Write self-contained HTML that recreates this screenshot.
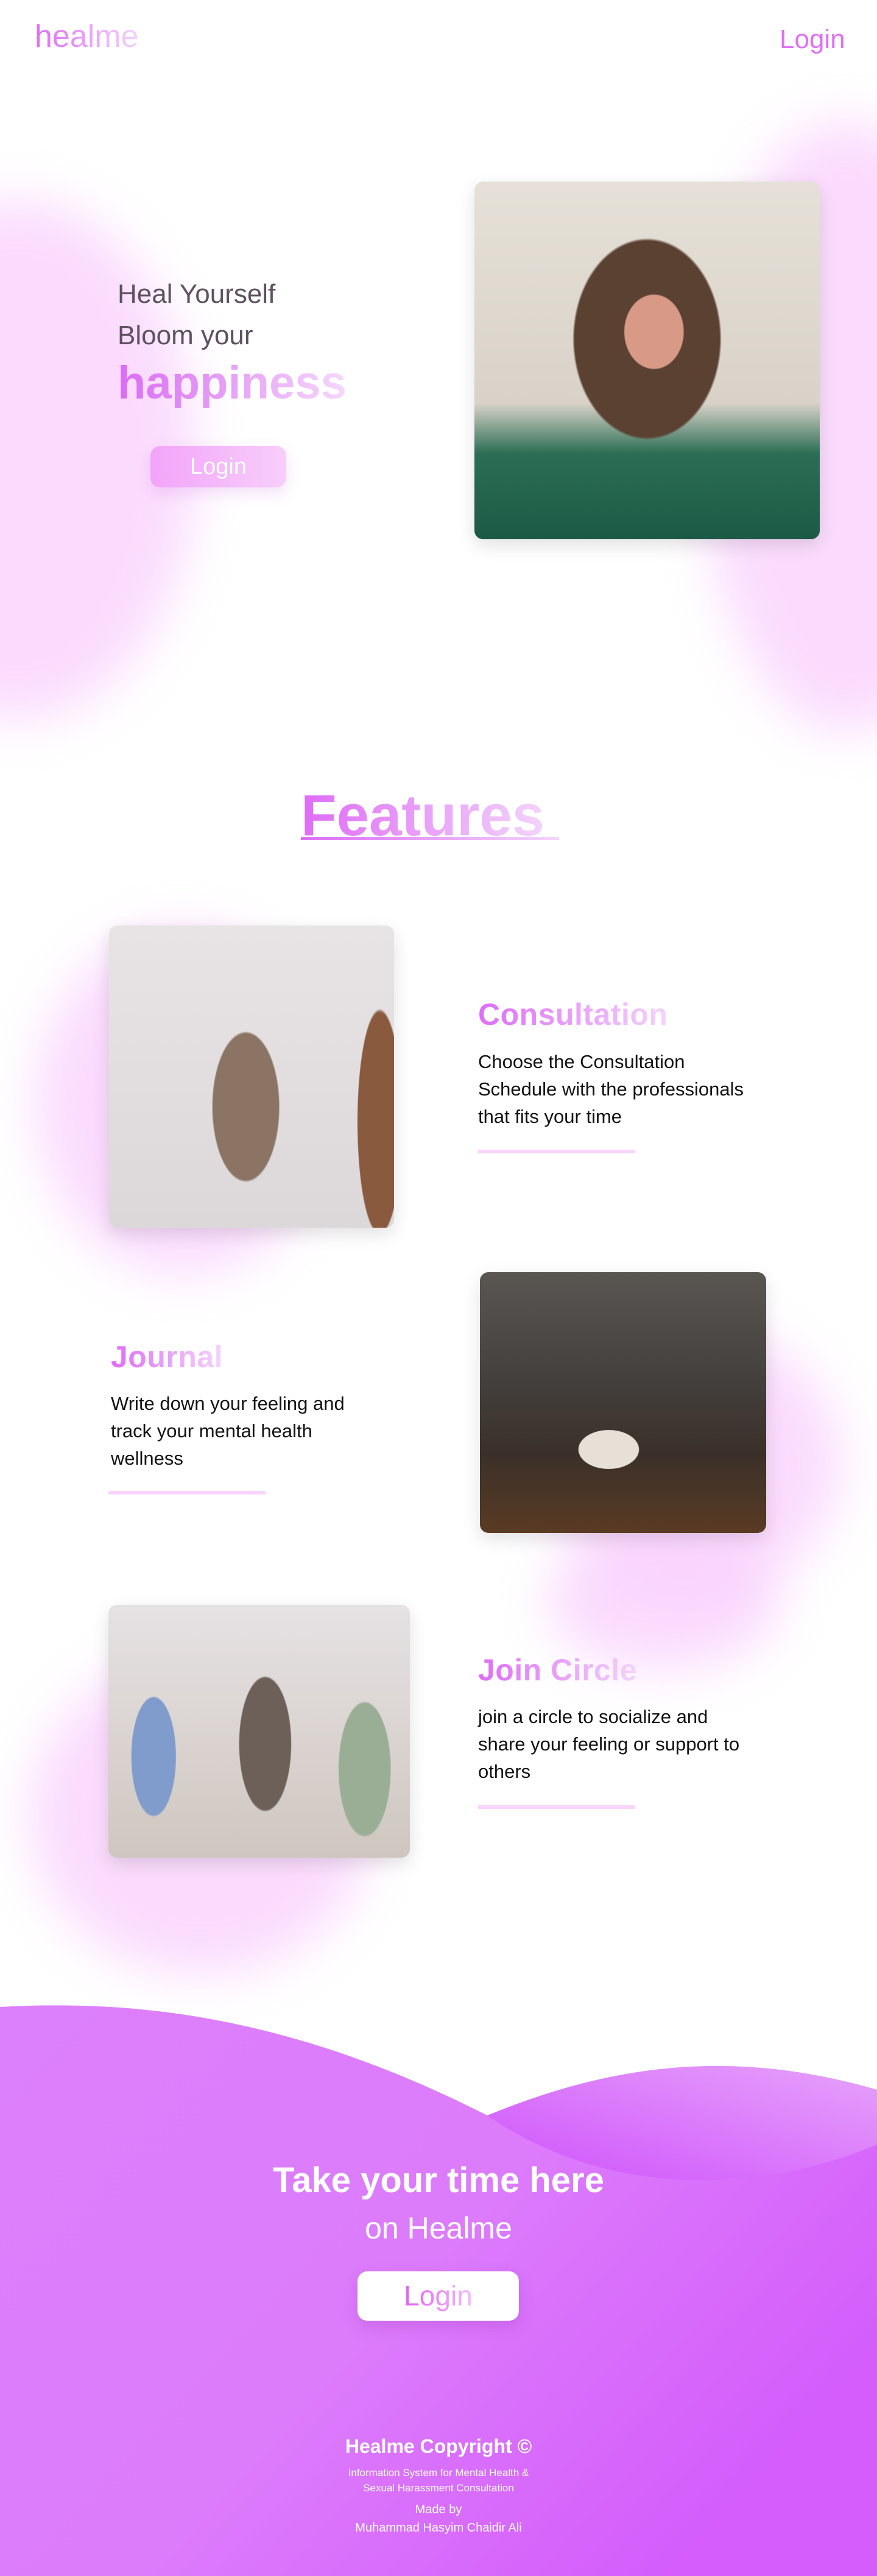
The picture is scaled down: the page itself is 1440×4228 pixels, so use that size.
<!DOCTYPE html>
<html><head><meta charset="utf-8"><style>
*{margin:0;padding:0;box-sizing:border-box}
body{width:1440px;height:4228px;position:relative;overflow:hidden;background:#fff;font-family:"Liberation Sans",sans-serif}
.a{position:absolute}
.blob{position:absolute;border-radius:50%;background:#f9cffd;filter:blur(40px);opacity:.75}
.grad{background:linear-gradient(90deg,#df6cf8,#f3d4fb);-webkit-background-clip:text;background-clip:text;color:transparent}
.h{font-weight:700;font-size:50px;letter-spacing:.5px}
.p{font-size:31px;line-height:45px;color:#111}
.ul{position:absolute;height:6px;width:258px;background:#f9d4fc}
.img{position:absolute;border-radius:14px;box-shadow:0 10px 30px rgba(0,0,0,.12);overflow:hidden}
</style></head><body>
<div class="blob" style="left:-260px;top:330px;width:580px;height:850px"></div>
<div class="blob" style="left:1150px;top:200px;width:480px;height:1000px"></div>
<div class="blob" style="left:60px;top:1530px;width:480px;height:560px"></div>
<div class="blob" style="left:900px;top:2180px;width:480px;height:440px"></div>
<div class="blob" style="left:50px;top:2720px;width:560px;height:520px"></div>
<div class="blob" style="left:900px;top:2510px;width:380px;height:230px"></div>

<div class="a grad" style="left:57px;top:30px;font-size:52px">healme</div>
<div class="a" style="left:1280px;top:40px;font-size:44px;color:#e070f5">Login</div>

<div class="img" style="left:779px;top:298px;width:567px;height:587px;background:
radial-gradient(ellipse 80px 100px at 52% 42%,#d89a86 60%,transparent 62%),
radial-gradient(ellipse 170px 230px at 50% 44%,#5b4131 70%,transparent 72%),
linear-gradient(180deg,#e6e1d8 0%,#d8d2c8 62%,#2c6e55 76%,#1c5a45 100%)"></div>

<div class="a" style="left:193px;top:449px;font-size:44px;color:#5e5160;line-height:68px">Heal Yourself<br>Bloom your</div>
<div class="a grad" style="left:193px;top:585px;font-size:76px;font-weight:700;background-image:linear-gradient(90deg,#d96cf4,#f5d8fb)">happiness</div>
<div class="a" style="left:247px;top:732px;width:223px;height:68px;border-radius:16px;background:linear-gradient(90deg,#f3a4f9,#f7cefb);box-shadow:0 10px 25px rgba(200,100,220,.2);color:#fff;font-size:38px;text-align:center;line-height:68px">Login</div>

<div class="a grad" style="left:494px;top:1284px;font-size:96px;font-weight:700">Features</div>
<div class="a" style="left:494px;top:1374px;width:424px;height:5px;background:linear-gradient(90deg,#dc6ef7,#f4d5fb)"></div>

<div class="img" style="left:179px;top:1519px;width:468px;height:496px;background:
radial-gradient(ellipse 90px 200px at 48% 60%,#8b7464 60%,transparent 62%),
radial-gradient(ellipse 60px 300px at 95% 65%,#8a5a3e 60%,transparent 62%),
linear-gradient(180deg,#e8e4e6,#dcd8da)"></div>
<div class="a grad h" style="left:785px;top:1636px">Consultation</div>
<div class="a p" style="left:785px;top:1720px">Choose the Consultation<br>Schedule with the professionals<br>that fits your time</div>
<div class="ul" style="left:785px;top:1887px"></div>

<div class="a grad h" style="left:182px;top:2198px">Journal</div>
<div class="a p" style="left:182px;top:2281px">Write down your feeling and<br>track your mental health<br>wellness</div>
<div class="ul" style="left:178px;top:2447px"></div>
<div class="img" style="left:788px;top:2088px;width:470px;height:428px;background:
radial-gradient(ellipse 70px 45px at 45% 68%,#e6e0d6 70%,transparent 72%),
linear-gradient(180deg,#5a5753 0%,#44413e 40%,#3b3029 70%,#5a3b24 100%)"></div>

<div class="img" style="left:178px;top:2634px;width:495px;height:415px;background:
radial-gradient(ellipse 60px 160px at 15% 60%,#7f9ccc 60%,transparent 62%),
radial-gradient(ellipse 70px 180px at 52% 55%,#6c6058 60%,transparent 62%),
radial-gradient(ellipse 70px 180px at 85% 65%,#9aae95 60%,transparent 62%),
linear-gradient(180deg,#e6e2e4,#cfc6bf)"></div>
<div class="a grad h" style="left:785px;top:2712px">Join Circle</div>
<div class="a p" style="left:785px;top:2795px">join a circle to socialize and<br>share your feeling or support to<br>others</div>
<div class="ul" style="left:785px;top:2963px"></div>

<svg class="a" style="left:0;top:3280px" width="1440" height="948" viewBox="0 0 1440 948">
<defs>
<linearGradient id="g1" x1="0" y1="0" x2="1" y2=".6"><stop offset="0" stop-color="#dd80fb"/><stop offset=".55" stop-color="#dc7cfb"/><stop offset="1" stop-color="#d45dfb"/></linearGradient>
<linearGradient id="g2" x1="0" y1="1" x2="1" y2="0"><stop offset="0" stop-color="#cf52fb"/><stop offset="1" stop-color="#e6a2fb"/></linearGradient>
</defs>
<path d="M0 14 C 250 0,500 40,800 192 C 1000 120,1200 80,1440 150 L1440 948 L0 948 Z" fill="url(#g1)"/>
<path d="M800 192 C 1000 110,1200 80,1440 150 L1440 240 C 1250 320,1000 330,800 192 Z" fill="url(#g2)"/>
</svg>
<div class="a" style="left:0;width:1440px;top:3545px;text-align:center;color:#fff;font-size:58px;font-weight:700">Take your time here</div>
<div class="a" style="left:0;width:1440px;top:3628px;text-align:center;color:#fff;font-size:50px">on Healme</div>
<div class="a" style="left:587px;top:3728px;width:265px;height:81px;border-radius:16px;background:#fff;box-shadow:0 10px 25px rgba(150,50,180,.25);text-align:center;line-height:81px;font-size:46px"><span class="grad" style="background-image:linear-gradient(90deg,#e060f5,#f6b8fb)">Login</span></div>
<div class="a" style="left:0;width:1440px;top:3997px;text-align:center;color:#fff;font-size:32px;font-weight:700">Healme Copyright ©</div>
<div class="a" style="left:0;width:1440px;top:4046px;text-align:center;color:#fff;font-size:17px;line-height:25px">Information System for Mental Health &amp;<br>Sexual Harassment Consultation</div>
<div class="a" style="left:0;width:1440px;top:4104px;text-align:center;color:#fff;font-size:20px;line-height:30px">Made by<br>Muhammad Hasyim Chaidir Ali</div>
</body></html>
